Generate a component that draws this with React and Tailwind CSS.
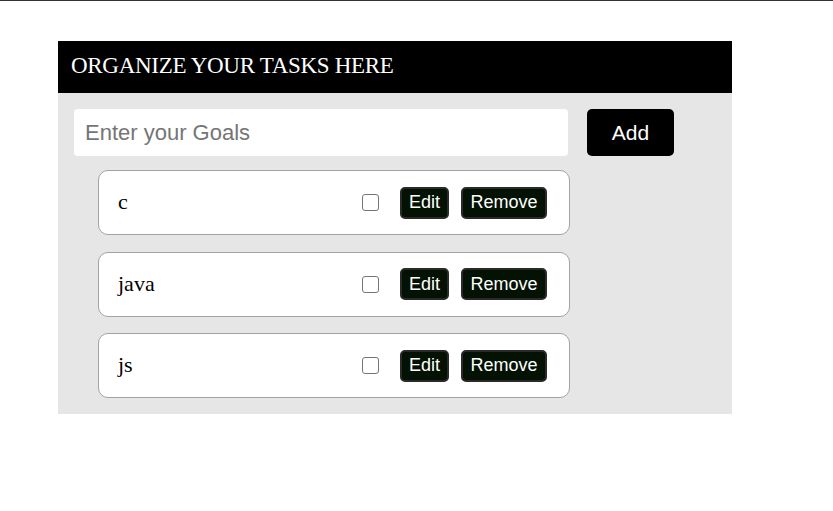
import React from 'react';

const tasks = ['c', 'java', 'js'];

function TaskItem({ text }) {
    return (
        <div className="flex h-[65px] w-[472px] items-center rounded-[10px] border border-[#a3a3a3] bg-white pl-[19px] pr-[22px]">
            <span className="-mt-[2px] flex-1 text-[22px] text-black" style={{ fontFamily: '"Liberation Serif", serif' }}>{text}</span>
            <span className="mr-[21px] h-[17px] w-[17px] rounded-[3px] border border-[#767676] bg-white"></span>
            <button className="mr-[12px] h-[32px] w-[49px] rounded-[5px] border-2 border-[#2a2a2a] bg-[#031203] text-[18px] text-white">Edit</button>
            <button className="h-[32px] w-[86px] rounded-[5px] border-2 border-[#2a2a2a] bg-[#031203] text-[18px] text-white">Remove</button>
        </div>
    );
}

export default function App() {
    return (
        <div className="min-h-[511px] border-t border-[#333] bg-white pt-[40px] pl-[58px]" style={{ fontFamily: '"Liberation Sans", Arial, sans-serif' }}>
            <div className="w-[674px]">
                {/* Header */}
                <div className="flex h-[52px] items-center bg-black pl-[13px]">
                    <h1 className="-mt-[2px] text-[23px] tracking-[-0.3px] text-white" style={{ fontFamily: '"Liberation Serif", serif' }}>ORGANIZE YOUR TASKS HERE</h1>
                </div>

                {/* Body */}
                <div className="bg-[#e6e6e6] pt-[16px] pb-[16px] pl-[16px]">
                    <div className="flex items-center">
                        <input
                            className="h-[47px] w-[494px] rounded-[4px] bg-white px-[11px] text-[22px] text-black outline-none placeholder:text-[#757575]"
                            placeholder="Enter your Goals"
                        />
                        <button className="ml-[19px] h-[47px] w-[87px] rounded-[5px] bg-black text-[21px] text-white">Add</button>
                    </div>
                    <div className="mt-[14px] flex flex-col gap-[16.5px] pl-[24px]">
                        {tasks.map((t) => (
                            <TaskItem key={t} text={t} />
                        ))}
                    </div>
                </div>
            </div>
        </div>
    );
}
